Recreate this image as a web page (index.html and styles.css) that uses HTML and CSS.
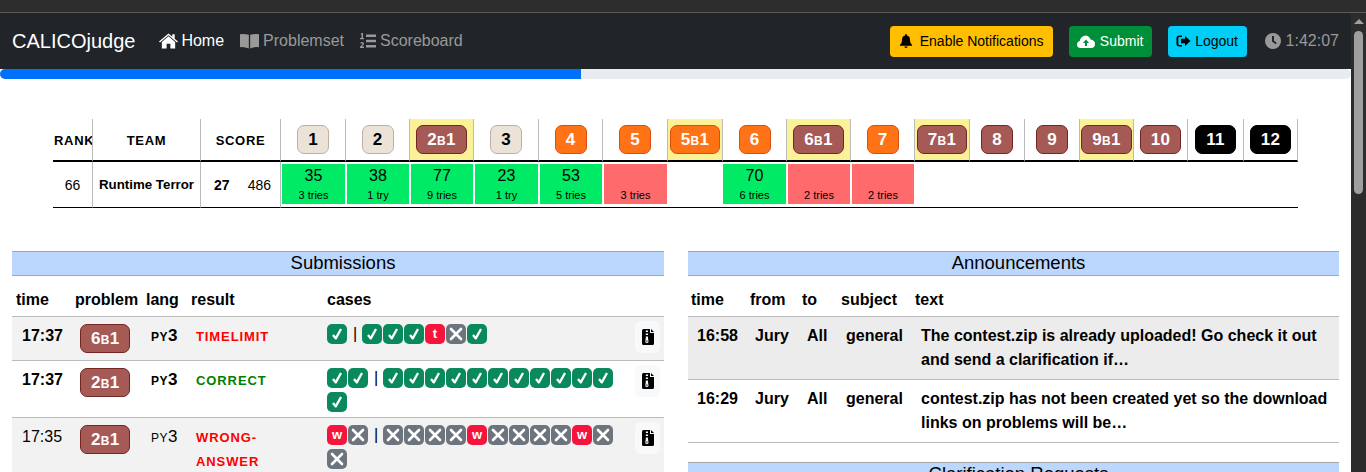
FILE: index.html
```html
<!DOCTYPE html>
<html lang="en">
<head>
    <meta charset="UTF-8">
    <meta name="viewport" content="width=device-width, initial-scale=1.0">
    <title>CALICOjudge</title>
    <link rel="stylesheet" href="styles.css">
</head>
<body>
    <svg class="defs" width="0" height="0">
        <symbol id="ok" viewBox="0 0 20 20"><path d="M6 11 8.800 14.400 14 5" fill="none" stroke="#fff" stroke-width="2.300" stroke-linejoin="round"/></symbol>
        <symbol id="no" viewBox="0 0 20 20"><path d="M5 5 15 15M15 5 5 15" fill="none" stroke="#fff" stroke-width="2.600" stroke-linecap="round"/></symbol>
        <symbol id="zip" viewBox="0 0 12 16"><path d="M1.500 0H8V4H12V14.500Q12 16 10.500 16H1.500Q0 16 0 14.500V1.500Q0 0 1.500 0ZM9 0 12 3H9ZM3.800 1.500H6V3H3.800ZM3.800 4.500H6V6H3.800ZM3.800 7.500H6V9L6.500 12.500Q6.500 14 4.900 14T3.300 12.500L3.800 9ZM4.300 11.600V12.800H5.500V11.600Z" fill="#000" fill-rule="evenodd"/></symbol>
    </svg>

    <div class="titlebar"></div>
    <div class="window">
        <div class="page">
            <nav class="navbar">
                <span class="brand">CALICOjudge</span>
                <a class="nav-link active">
                    <svg class="nav-icon" viewBox="0 0 20 16"><path d="M10 0 14 3.400V1H16.500V5.500L20 8.500 19 9.700 10 2 1 9.700 0 8.500ZM10 3 17 9V16H12V11H8V16H3V9Z" fill="#fff"/></svg>
                    Home
                </a>
                <a class="nav-link">
                    <svg class="nav-icon" viewBox="0 0 20 16"><path d="M0 1Q4 0 9.300 1.500V16Q5 14 0 14.500ZM20 1Q16 0 10.700 1.500V16Q15 14 20 14.500Z" fill="#999"/></svg>
                    Problemset
                </a>
                <a class="nav-link">
                    <svg class="nav-icon nav-icon-list" viewBox="0 0 16 16"><path d="M6 1.500H16V4H6ZM6 6.800H16V9.300H6ZM6 12H16V14.500H6ZM1.500 0H3V5H4V6.200H0V5H1.500V1.500H.6ZM.3 10Q.8 9 2.300 9 4 9 4 10.500 4 11.500 2 13.500H4V15H0V13.800Q2.500 11.500 2.500 10.700 2.500 10.200 2 10.200 1.300 10.200 1 11Z" fill="#999"/></svg>
                    Scoreboard
                </a>
                <div class="nav-right">
                    <button class="btn btn-notify">
                        <svg class="btn-icon" viewBox="0 0 14 16"><path d="M7 0Q8 0 8 1V1.700Q11.500 2.400 11.500 6.500 11.500 10.500 14 12.500V13.500H0V12.500Q2.500 10.500 2.500 6.500 2.500 2.400 6 1.700V1Q6 0 7 0ZM5 14.400H9Q8.800 16 7 16T5 14.400Z" fill="#000"/></svg>
                        Enable Notifications
                    </button>
                    <button class="btn btn-submit">
                        <svg class="btn-icon btn-icon-wide" viewBox="0 0 18 13"><path fill-rule="evenodd" d="M4 13Q0 13 0 9.500 0 6.800 2.800 6 3.200 2.500 6.500 1 10-.5 12.500 2.500 13.300 3.500 13.500 4.500 18 5 18 9 18 13 14 13ZM9 4.500 5.800 8H8V11H10V8H12.200Z" fill="#fff"/></svg>
                        Submit
                    </button>
                    <button class="btn btn-logout">
                        <svg class="btn-icon btn-icon-out" viewBox="0 0 14 14"><path d="M5.500 1.500V3H3Q1.800 3 1.800 4V10Q1.800 11 3 11H5.500V12.500H3Q0 12.500 0 10V4Q0 1.500 3 1.500ZM8.500 2 14 7 8.500 12V9.200H4.500V4.800H8.500Z" fill="#000"/></svg>
                        Logout
                    </button>
                    <span class="clock">
                        <svg class="clock-icon" viewBox="0 0 16 16"><path fill-rule="evenodd" d="M8 0A8 8 0 1 1 8 16 8 8 0 0 1 8 0ZM7 3V8.500L10.800 11.300 11.800 10 9 7.800V3Z" fill="#999"/></svg>
                        1:42:07
                    </span>
                </div>
            </nav>
            <div class="progress"><div class="progress-bar" style="width: 43%"></div></div>

            <table class="scoreboard">
                <colgroup>
                    <col class="c-rank"><col class="c-team"><col class="c-solved"><col class="c-penalty">
                    <col class="c65"><col class="c64"><col class="c64"><col class="c65"><col class="c64"><col class="c65"><col class="c55"><col class="c64"><col class="c64"><col class="c64"><col class="c55"><col class="c55"><col class="c55"><col class="c54"><col class="c54"><col class="c56"><col class="c54">
                </colgroup>
                <thead>
                    <tr>
                        <th class="sc-head">rank</th>
                        <th class="sc-head">team</th>
                        <th class="sc-head" colspan="2">score</th>
                        <th><span class="pb pb-plain">1</span></th>
                        <th><span class="pb pb-plain">2</span></th>
                        <th class="bonus"><span class="pb pb-brown">2b1</span></th>
                        <th><span class="pb pb-plain">3</span></th>
                        <th><span class="pb pb-orange">4</span></th>
                        <th><span class="pb pb-orange">5</span></th>
                        <th class="bonus"><span class="pb pb-orange">5b1</span></th>
                        <th><span class="pb pb-orange">6</span></th>
                        <th class="bonus"><span class="pb pb-brown">6b1</span></th>
                        <th><span class="pb pb-orange">7</span></th>
                        <th class="bonus"><span class="pb pb-brown">7b1</span></th>
                        <th><span class="pb pb-brown">8</span></th>
                        <th><span class="pb pb-brown">9</span></th>
                        <th class="bonus"><span class="pb pb-brown">9b1</span></th>
                        <th><span class="pb pb-brown">10</span></th>
                        <th><span class="pb pb-black">11</span></th>
                        <th><span class="pb pb-black">12</span></th>
                    </tr>
                </thead>
                <tbody>
                    <tr>
                        <td class="info">66</td>
                        <td class="info team">Runtime Terror</td>
                        <td class="info solved">27</td>
                        <td class="info penalty">486</td>
                        <td class="score"><div class="cell cell-ok">35<small>3 tries</small></div></td>
                        <td class="score"><div class="cell cell-ok">38<small>1 try</small></div></td>
                        <td class="score"><div class="cell cell-ok">77<small>9 tries</small></div></td>
                        <td class="score"><div class="cell cell-ok">23<small>1 try</small></div></td>
                        <td class="score"><div class="cell cell-ok">53<small>5 tries</small></div></td>
                        <td class="score"><div class="cell cell-bad"><small>3 tries</small></div></td>
                        <td class="score"></td>
                        <td class="score score-tight"><div class="cell cell-ok">70<small>6 tries</small></div></td>
                        <td class="score"><div class="cell cell-bad"><small>2 tries</small></div></td>
                        <td class="score"><div class="cell cell-bad"><small>2 tries</small></div></td>
                        <td class="score"></td><td class="score"></td><td class="score"></td><td class="score"></td><td class="score"></td><td class="score"></td><td class="score"></td>
                    </tr>
                </tbody>
            </table>

            <div class="columns">
                <section class="panel">
                    <h2 class="panel-title">Submissions</h2>
                    <table class="list subs">
                        <colgroup><col class="s-time"><col class="s-prob"><col class="s-lang"><col class="s-res"><col class="s-cases"><col class="s-file"></colgroup>
                        <thead><tr><th>time</th><th>problem</th><th>lang</th><th>result</th><th>cases</th><th></th></tr></thead>
                        <tbody>
                            <tr class="odd unread">
                                <td>17:37</td>
                                <td class="prob"><span class="pb pb-brown">6b1</span></td>
                                <td class="lang">py3</td>
                                <td class="verdict v-bad">timelimit</td>
                                <td class="cases">
                                    <span class="tc tc-ok"><svg><use href="#ok"/></svg></span><span class="sep">|</span><span class="tc tc-ok"><svg><use href="#ok"/></svg></span><span class="tc tc-ok"><svg><use href="#ok"/></svg></span><span class="tc tc-ok"><svg><use href="#ok"/></svg></span><span class="tc tc-err">t</span><span class="tc tc-no"><svg><use href="#no"/></svg></span><span class="tc tc-ok"><svg><use href="#ok"/></svg></span>
                                </td>
                                <td class="file"><span class="file-btn"><svg><use href="#zip"/></svg></span></td>
                            </tr>
                            <tr class="unread">
                                <td>17:37</td>
                                <td class="prob"><span class="pb pb-brown">2b1</span></td>
                                <td class="lang">py3</td>
                                <td class="verdict v-ok">correct</td>
                                <td class="cases">
                                    <span class="tc tc-ok"><svg><use href="#ok"/></svg></span><span class="tc tc-ok"><svg><use href="#ok"/></svg></span><span class="sep">|</span><span class="tc tc-ok"><svg><use href="#ok"/></svg></span><span class="tc tc-ok"><svg><use href="#ok"/></svg></span><span class="tc tc-ok"><svg><use href="#ok"/></svg></span><span class="tc tc-ok"><svg><use href="#ok"/></svg></span><span class="tc tc-ok"><svg><use href="#ok"/></svg></span><span class="tc tc-ok"><svg><use href="#ok"/></svg></span><span class="tc tc-ok"><svg><use href="#ok"/></svg></span><span class="tc tc-ok"><svg><use href="#ok"/></svg></span><span class="tc tc-ok"><svg><use href="#ok"/></svg></span><span class="tc tc-ok"><svg><use href="#ok"/></svg></span><span class="tc tc-ok"><svg><use href="#ok"/></svg></span><span class="tc tc-ok"><svg><use href="#ok"/></svg></span>
                                </td>
                                <td class="file"><span class="file-btn"><svg><use href="#zip"/></svg></span></td>
                            </tr>
                            <tr class="odd">
                                <td>17:35</td>
                                <td class="prob"><span class="pb pb-brown">2b1</span></td>
                                <td class="lang">py3</td>
                                <td class="verdict v-bad">wrong-answer</td>
                                <td class="cases">
                                    <span class="tc tc-err">w</span><span class="tc tc-no"><svg><use href="#no"/></svg></span><span class="sep">|</span><span class="tc tc-no"><svg><use href="#no"/></svg></span><span class="tc tc-no"><svg><use href="#no"/></svg></span><span class="tc tc-no"><svg><use href="#no"/></svg></span><span class="tc tc-no"><svg><use href="#no"/></svg></span><span class="tc tc-err">w</span><span class="tc tc-no"><svg><use href="#no"/></svg></span><span class="tc tc-no"><svg><use href="#no"/></svg></span><span class="tc tc-no"><svg><use href="#no"/></svg></span><span class="tc tc-no"><svg><use href="#no"/></svg></span><span class="tc tc-err">w</span><span class="tc tc-no"><svg><use href="#no"/></svg></span><span class="tc tc-no"><svg><use href="#no"/></svg></span>
                                </td>
                                <td class="file"><span class="file-btn"><svg><use href="#zip"/></svg></span></td>
                            </tr>
                        </tbody>
                    </table>
                </section>

                <section class="panel">
                    <h2 class="panel-title">Announcements</h2>
                    <table class="list news">
                        <colgroup><col class="n-time"><col class="n-from"><col class="n-to"><col class="n-subj"><col class="n-text"></colgroup>
                        <thead><tr><th>time</th><th>from</th><th>to</th><th>subject</th><th>text</th></tr></thead>
                        <tbody>
                            <tr class="shade unread">
                                <td>16:58</td><td>Jury</td><td>All</td><td>general</td>
                                <td>The contest.zip is already uploaded! Go check it out and send a clarification if…</td>
                            </tr>
                            <tr class="unread">
                                <td>16:29</td><td>Jury</td><td>All</td><td>general</td>
                                <td>contest.zip has not been created yet so the download links on problems will be…</td>
                            </tr>
                        </tbody>
                    </table>
                    <h2 class="panel-title panel-next">Clarification Requests</h2>
                </section>
            </div>
        </div>

        <div class="scrollbar">
            <span class="scroll-up"></span>
            <span class="scroll-thumb"></span>
        </div>
    </div>
</body>
</html>
```

FILE: styles.css
```css
html, body {
    height: 472px;
    margin: 0;
    overflow: hidden;
}
body {
    font-family: "Liberation Sans", Arial, sans-serif;
    font-size: 16px;
    color: #000;
    background-color: #fff;
}
.defs {
    position: absolute;
}
.titlebar {
    height: 12px;
    background-color: #2d2d2d;
    border-bottom: 1px solid #5a5a5a;
}
.window {
    display: flex;
    height: 459px;
}
.page {
    width: 1351px;
    flex: none;
    overflow: hidden;
}

/* navbar */
.navbar {
    display: flex;
    align-items: center;
    height: 56px;
    padding: 0 12px;
    background-color: #212529;
    box-sizing: border-box;
}
.brand {
    font-size: 20px;
    color: #fff;
    margin-right: 24px;
}
.nav-link {
    display: flex;
    align-items: center;
    gap: 4px;
    color: #999;
    margin-right: 16px;
}
.nav-link.active {
    gap: 3px;
    color: #fff;
}
.nav-icon {
    width: 19px;
    height: 16px;
}
.nav-icon-list {
    width: 16px;
    height: 16px;
}
.nav-right {
    display: flex;
    align-items: center;
    margin-left: auto;
}
.btn {
    display: flex;
    align-items: center;
    justify-content: center;
    gap: 5px;
    height: 31px;
    padding: 0;
    margin-right: 16px;
    border: none;
    border-radius: 4px;
    font-family: inherit;
    font-size: 14px;
}
.btn-notify {
    gap: 7px;
    width: 163px;
    background-color: #ffbf00;
    color: #000;
}
.btn-submit {
    width: 83px;
    background-color: #008f39;
    color: #fff;
}
.btn-logout {
    gap: 4px;
    width: 79px;
    background-color: #00cef7;
    color: #000;
}
.btn-icon {
    width: 14px;
    height: 14px;
}
.btn-icon-wide {
    width: 18px;
    height: 13px;
}
.btn-icon-out {
    width: 15px;
}
.clock {
    display: flex;
    align-items: center;
    gap: 5px;
    margin-left: 2px;
    color: #999;
}
.clock-icon {
    width: 16px;
    height: 16px;
}
.progress {
    height: 10px;
    background-color: #e9ecef;
    border-radius: 5px;
    overflow: hidden;
}
.progress-bar {
    height: 100%;
    background-color: #0070ff;
}

/* scoreboard */
.scoreboard {
    table-layout: fixed;
    width: 1245px;
    margin: 40px 0 43px 53px;
    border-collapse: separate;
    border-spacing: 0;
}
.c-rank { width: 40px; }
.c-team { width: 108px; }
.c-solved { width: 40px; }
.c-penalty { width: 40px; }
.c65 { width: 65px; }
.c64 { width: 64px; }
.c55 { width: 55px; }
.c54 { width: 54px; }
.c56 { width: 56px; }
.scoreboard th {
    height: 43px;
    padding: 0;
    border-right: 1px solid #bbb;
    border-bottom: 2px solid #000;
    box-sizing: border-box;
    text-align: center;
    vertical-align: middle;
}
.scoreboard th.bonus {
    background-color: #fbf197;
}
.sc-head {
    font-variant: small-caps;
    font-size: 18px;
    letter-spacing: .7px;
    white-space: nowrap;
}
.scoreboard th:first-child {
    padding-left: 1px;
    overflow: hidden;
    text-align: left;
}
.pb {
    display: inline-block;
    box-sizing: border-box;
    min-width: 32px;
    height: 29px;
    padding: 0 10px;
    border: 1px solid;
    border-radius: 7px;
    font-size: 17px;
    font-weight: bold;
    font-variant: small-caps;
    line-height: 27px;
    letter-spacing: .3px;
    text-align: center;
    vertical-align: top;
}
.pb-plain { background-color: #ebe3d7; border-color: #bcb1a2; color: #000; }
.pb-orange { background-color: #ff7316; border-color: #d84f0e; color: #fff; }
.pb-brown { background-color: #a55a55; border-color: #752522; color: #fff; }
.pb-black { background-color: #000; border-color: #000; color: #fff; }
.scoreboard td {
    padding: 0;
    border-bottom: 1px solid #000;
    height: 46px;
    box-sizing: border-box;
}
.info {
    border-right: 1px solid #bbb;
    font-size: 14px;
    text-align: center;
}
.scoreboard .team {
    font-size: 13.3px;
    font-weight: bold;
}
.scoreboard .solved {
    border-right: none;
    font-weight: bold;
    text-align: left;
    padding-left: 13px;
}
.scoreboard .penalty {
    text-align: right;
    padding-right: 9px;
}
.scoreboard .score {
    padding: 2px 1px 3px 1px;
    vertical-align: top;
}
.scoreboard .score-tight {
    padding-left: 0;
}
.cell {
    display: flex;
    flex-direction: column;
    align-items: center;
    justify-content: flex-end;
    height: 40px;
    padding-bottom: 2px;
    box-sizing: border-box;
    font-size: 16px;
    line-height: 20px;
}
.cell small {
    margin-top: 2px;
    font-size: 11px;
    line-height: 14px;
}
.cell-ok { background-color: #00ea66; }
.cell-bad { background-color: #ff6a6d; }

/* lower panels */
.columns {
    display: flex;
    gap: 24px;
    padding: 0 12px;
}
.panel {
    width: 652px;
}
.panel + .panel {
    width: 651px;
}
.panel-title {
    height: 25px;
    margin: 0;
    padding-left: 10px;
    background-color: #bbd7fd;
    border-top: 1px solid #a6a6a6;
    border-bottom: 1px solid #a6a6a6;
    box-sizing: border-box;
    font-size: 18.5px;
    font-weight: normal;
    line-height: 22px;
    text-align: center;
}
.panel-next {
    margin-top: 19px;
}
.list {
    table-layout: fixed;
    width: 100%;
    border-collapse: collapse;
}
.list th {
    height: 40px;
    padding: 9px 0 0 4px;
    border-bottom: 1px solid #bbb;
    box-sizing: border-box;
    text-align: left;
    font-size: 16px;
    white-space: nowrap;
}
.list td {
    padding: 7px 0 7px 10px;
    border-bottom: 1px solid #bbb;
    line-height: 24px;
    vertical-align: top;
}
.unread td {
    font-weight: bold;
}
.odd { background-color: #f2f2f2; }
.shade { background-color: #ececec; }

.s-time { width: 59px; }
.s-prob { width: 71px; }
.s-lang { width: 45px; }
.s-res { width: 136px; }
.s-cases { width: 307px; }
.list .prob {
    padding-left: 9px;
    line-height: 0;
}
.list .lang {
    font-variant: small-caps;
    font-size: 17px;
    letter-spacing: .5px;
    padding-left: 9px;
}
.list .verdict {
    padding-top: 8px;
    padding-left: 9px;
    padding-right: 30px;
    font-size: 13px;
    font-weight: bold;
    text-transform: uppercase;
    letter-spacing: .9px;
}
.v-bad { color: #f00; }
.v-ok { color: #008000; }
.list .cases {
    padding-left: 4px;
    padding-bottom: 1px;
    font-size: 0;
}
.tc {
    display: inline-block;
    width: 20px;
    height: 20px;
    margin: 0 1px 4px 0;
    border-radius: 5px;
    color: #fff;
    font-size: 13px;
    font-weight: bold;
    line-height: 19px;
    text-align: center;
    vertical-align: top;
}
.tc svg {
    display: block;
    width: 20px;
    height: 20px;
}
.tc-ok { background-color: #0a8a5c; }
.tc-no { background-color: #6c757d; }
.tc-err { background-color: #f5153c; }
.sep {
    display: inline-block;
    width: 14px;
    font-size: 16px;
    font-weight: normal;
    line-height: 20px;
    text-align: center;
    vertical-align: top;
}
.list .file {
    padding: 4px 0 0 5px;
}
.file-btn {
    display: flex;
    align-items: center;
    justify-content: center;
    width: 25px;
    height: 32px;
    border-radius: 6px;
    background-color: #f8f9fa;
}
.file-btn svg {
    width: 12px;
    height: 16px;
}

.n-time { width: 59px; }
.n-from { width: 52px; }
.n-to { width: 39px; }
.n-subj { width: 74px; }
.news th {
    padding-left: 3px;
}
.news td {
    padding: 7px 0 7px 9px;
}
.news td:nth-child(2),
.news td:nth-child(3),
.news td:nth-child(4) {
    padding-left: 8px;
}
.news td:last-child {
    padding-right: 4px;
}

/* fake scrollbar, the shot includes the browser one */
.scrollbar {
    position: relative;
    flex: 1;
    background-color: #2c2c2c;
}
.scroll-up {
    position: absolute;
    top: 6px;
    left: 3px;
    border-left: 5px solid transparent;
    border-right: 5px solid transparent;
    border-bottom: 5px solid #9f9f9f;
}
.scroll-thumb {
    position: absolute;
    top: 18px;
    left: 3px;
    width: 9px;
    height: 163px;
    border-radius: 5px;
    background-color: #9f9f9f;
}
```
